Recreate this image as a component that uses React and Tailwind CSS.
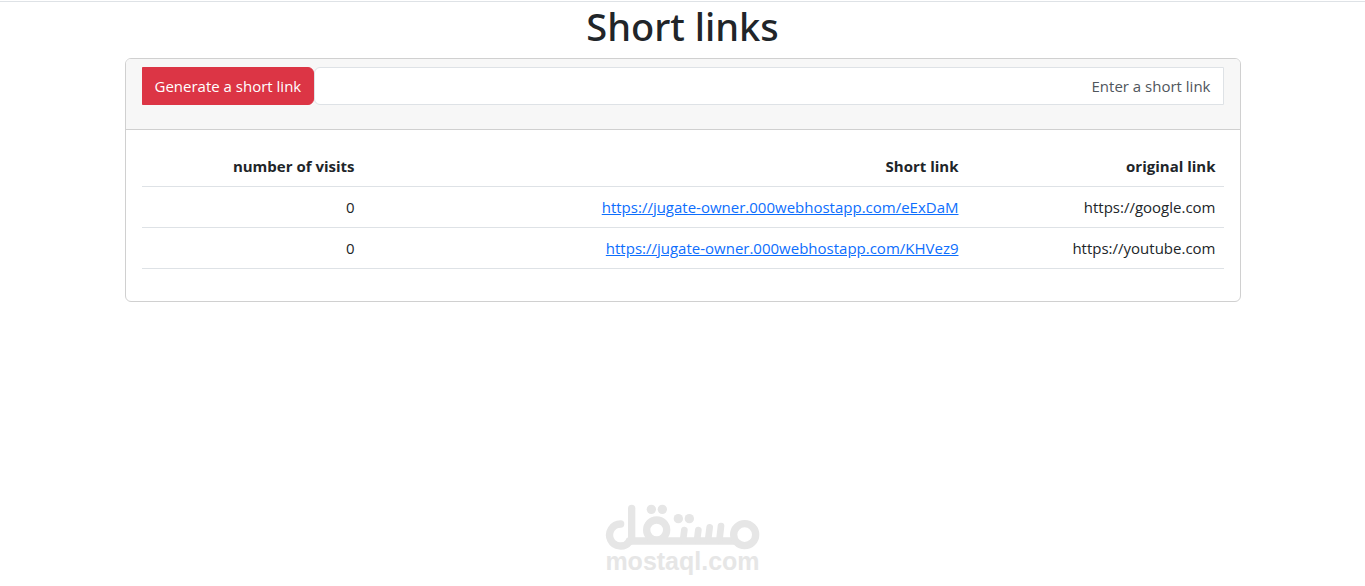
const links = [
  { original: 'https://google.com', short: 'https://jugate-owner.000webhostapp.com/eExDaM', visits: 0 },
  { original: 'https://youtube.com', short: 'https://jugate-owner.000webhostapp.com/KHVez9', visits: 0 },
]

function MostaqlLogo() {
  return (
    <div dir="ltr" className="flex flex-col items-center text-[#e6e6e6]">
      <svg viewBox="45 40 465 138" className="w-[155px] h-[46px]" fill="none" stroke="currentColor" strokeWidth="22" strokeLinecap="round" aria-hidden="true">
        <path d="M92 100A33 33 0 1 0 118 153" />
        <path d="M125 53V150" />
        <path d="M118 151H434" />
        <circle cx="200" cy="118" r="30" />
        <circle cx="464" cy="132" r="33" />
        <path d="M283 118L279 150M325 118L321 150M359 110L354 150M393 106L388 150" strokeWidth="20" />
        <g fill="currentColor" stroke="none">
          <circle cx="184" cy="56" r="14" />
          <circle cx="217" cy="56" r="14" />
          <circle cx="265" cy="84" r="14" />
          <circle cx="298" cy="84" r="14" />
        </g>
      </svg>
      <span className="font-['Liberation_Sans',sans-serif] text-[25px] leading-[22px] font-bold">mostaql.com</span>
    </div>
  )
}

export default function App() {
  return (
    <div dir="rtl" className="min-h-screen flex flex-col pt-px bg-white text-[#212529] text-[15px] leading-6 font-['Open_Sans',sans-serif]">
      <main className="w-full border-t border-[#dee2e6]">
        <div className="max-w-[1140px] mx-auto px-3">
          <h1 className="mb-2 text-center text-[38px] leading-12 font-medium font-['Noto_Sans',sans-serif]">Short links</h1>

          <div className="rounded-md border border-[#d0d0d0] overflow-hidden">
            {/* Form */}
            <div className="px-4 py-2 bg-[#f7f7f7] border-b border-[#d0d0d0]">
              <form className="flex mb-4" onSubmit={(e) => e.preventDefault()}>
                <input
                  type="text"
                  aria-label="Enter a short link"
                  placeholder="Enter a short link"
                  className="flex-1 min-w-0 px-3 py-1.5 bg-white border border-[#dee2e6] rounded-l-md placeholder:text-[#50565c] outline-none"
                />
                <button type="submit" className="px-3 py-1.5 border border-[#dc3545] bg-[#dc3545] text-white rounded-r-md">
                  Generate a short link
                </button>
              </form>
            </div>

            {/* Links */}
            <div className="p-4">
              <table className="w-full mb-4 border-collapse">
                <thead>
                  <tr className="border-b border-[#dee2e6]">
                    <th className="w-[257px] p-2 text-start font-bold">original link</th>
                    <th className="p-2 text-start font-bold">Short link</th>
                    <th className="w-[221px] p-2 text-start font-bold">number of visits</th>
                  </tr>
                </thead>
                <tbody>
                  {links.map((l) => (
                    <tr key={l.short} className="border-b border-[#dee2e6]">
                      <td className="p-2">{l.original}</td>
                      <td className="p-2">
                        <a href={l.short} className="text-[#0d6efd] underline">{l.short}</a>
                      </td>
                      <td className="p-2">{l.visits}</td>
                    </tr>
                  ))}
                </tbody>
              </table>
            </div>
          </div>
        </div>
      </main>

      <footer className="mt-auto pb-3.5 flex justify-center">
        <MostaqlLogo />
      </footer>
    </div>
  )
}
